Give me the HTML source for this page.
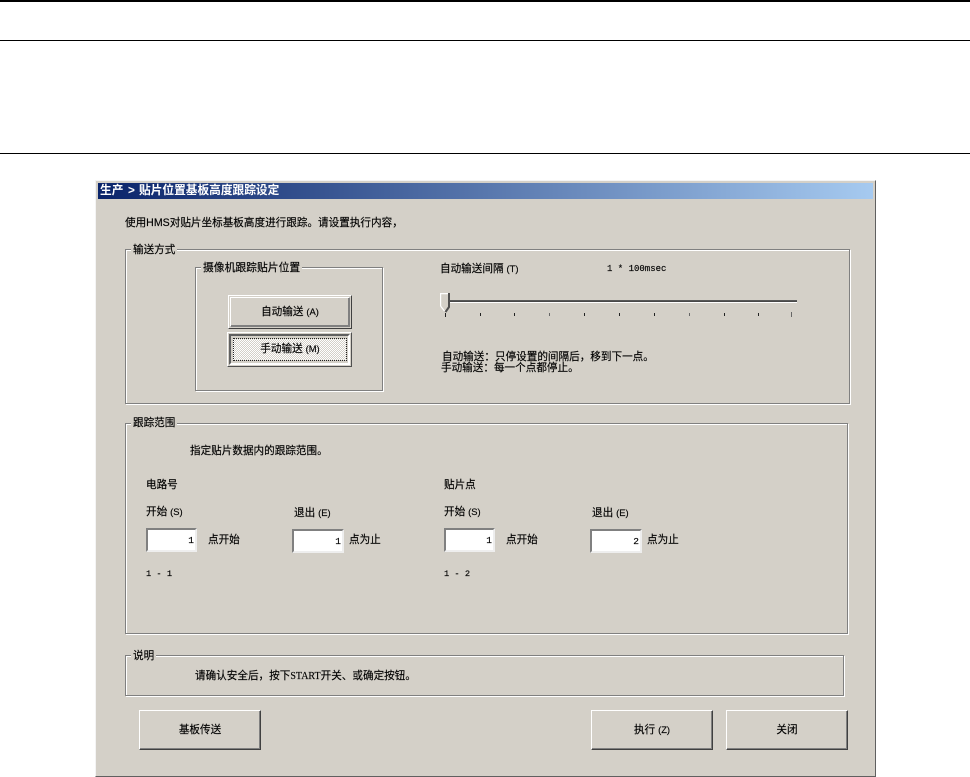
<!DOCTYPE html>
<html lang="zh-CN"><head><meta charset="utf-8"><title>贴片位置基板高度跟踪设定</title>
<style>
html,body{margin:0;padding:0;background:#fff;width:970px;height:777px;overflow:hidden}
body{position:relative;font-family:"Liberation Sans","WenQuanYi Zen Hei","Noto Sans CJK SC",sans-serif;font-size:10.6px;color:#000;-webkit-font-smoothing:none;-webkit-text-stroke:0.15px #000}
div,span{position:absolute;box-sizing:border-box;white-space:nowrap}
.t{line-height:12px}
.hr{left:0;width:970px;height:1px;background:#000}
.g{border:1px solid #808080;box-shadow:1px 1px 0 #fff,inset 1px 1px 0 #fff}
.l{background:#d4d0c8;padding:0 2px;line-height:12px}
.b{background:#d4d0c8;border-top:1px solid #fff;border-left:1px solid #fff;border-right:1px solid #404040;border-bottom:1px solid #404040;box-shadow:inset -1px -1px 0 #808080;text-align:center}
.bb{background:#d4d0c8;border:1px solid;border-color:#fff #404040 #404040 #fff;text-align:center}
.bi{border:1px solid;border-color:#fff #808080 #808080 #fff;box-shadow:inset -1px -1px 0 #808080;text-align:center}
.i{background:#fff;border:2px solid;border-color:#808080 #eee #eee #808080;text-align:right;padding-right:1px;line-height:21px;font-family:"Liberation Mono",monospace;font-size:9.5px}
.k{width:1px;height:3px;top:313px;background:#222}
.m{font-family:"Liberation Mono","WenQuanYi Zen Hei",monospace}
.s{position:static;font-size:9.4px}
</style></head><body>
<div class="hr" style="top:0;height:2px"></div>
<div class="hr" style="top:40px"></div>
<div class="hr" style="top:153px"></div>

<div style="left:95px;top:180px;width:781px;height:597px;background:#d4d0c8;border:1px solid;border-color:#f4f4f4 #606060 #606060 #f4f4f4;box-shadow:inset 1px 1px 0 #d4d0c8"></div>
<div style="left:98px;top:183px;width:775px;height:16px;background:linear-gradient(90deg,#0a246a,#a6caf0)"></div>
<div class="t" style="left:100px;top:185px;color:#fff;font-weight:bold;font-size:11.7px;-webkit-text-stroke:0">生产</div>
<div class="t" style="left:128px;top:185px;color:#fff;font-weight:bold;font-size:11.7px;-webkit-text-stroke:0">&gt;</div>
<div class="t" style="left:139px;top:185px;color:#fff;font-weight:bold;font-size:11.7px;-webkit-text-stroke:0">贴片位置基板高度跟踪设定</div>
<div class="t" style="left:125px;top:217px">使用HMS对贴片坐标基板高度进行跟踪。请设置执行内容，</div>

<div class="g" style="left:125px;top:249px;width:725px;height:155px"></div>
<div class="l" style="left:131px;top:244px">输送方式</div>
<div class="g" style="left:195px;top:267px;width:188px;height:124px"></div>
<div class="l" style="left:201px;top:262px;font-size:10.8px">摄像机跟踪贴片位置</div>

<div class="bb" style="left:228px;top:295px;width:124px;height:34px"></div>
<div class="bi" style="left:230px;top:297px;width:120px;height:30px;line-height:27px">自动输送 <span class="s">(A)</span></div>

<div class="bb" style="left:227px;top:332px;width:125px;height:35px;border-color:#fff #505050 #505050 #fff"></div>
<div style="left:229px;top:334px;width:121px;height:31px;border:2px solid;border-color:#606060 #fff #fff #606060"></div>
<div style="left:233px;top:338px;width:114px;height:23px;border:1px dotted #222;background:repeating-conic-gradient(#fff 0 25%,#d4d0c8 0 50%) 0 0/2px 2px;text-align:center;line-height:20px">手动输送 <span class="s">(M)</span></div>

<div class="t" style="left:440px;top:263px">自动输送间隔 <span class="s">(T)</span></div>
<div class="t m" style="left:607px;top:263px;font-size:9px">1 * 100msec</div>
<div style="left:449px;top:300px;width:348px;height:3px;background:linear-gradient(#707070 0,#404040 33%,#505050 66%,#fff 66%)"></div>
<svg style="position:absolute;left:440px;top:293px" width="12" height="20" viewBox="0 0 12 20"><path d="M0.5 0.5H9V14L5.5 19L0.5 13Z" fill="#d4d0c8"/><path d="M0.5 13V0.5H8.5" fill="none" stroke="#fff" stroke-width="1.4"/><path d="M0.5 13L4.5 18" stroke="#fff" fill="none" stroke-width="1.2"/><path d="M9 0V14L5.5 19" fill="none" stroke="#505050" stroke-width="2"/></svg>
<div class="k" style="left:445px;top:313px;height:4px"></div><div class="k" style="left:480px"></div><div class="k" style="left:514px"></div><div class="k" style="left:549px;background:#666"></div><div class="k" style="left:584px"></div><div class="k" style="left:619px"></div><div class="k" style="left:654px"></div><div class="k" style="left:689px;background:#666"></div><div class="k" style="left:724px"></div><div class="k" style="left:758px"></div><div class="k" style="left:791px;top:312px;height:5px;background:#666"></div>
<div class="t" style="left:442px;top:351px">自动输送：只停设置的间隔后，移到下一点。</div>
<div class="t" style="left:441px;top:362px">手动输送：每一个点都停止。</div>

<div class="g" style="left:125px;top:423px;width:723px;height:211px"></div>
<div class="l" style="left:131px;top:417px">跟踪范围</div>
<div class="t" style="left:190px;top:445px">指定贴片数据内的跟踪范围。</div>
<div class="t" style="left:146px;top:479px">电路号</div>
<div class="t" style="left:146px;top:506px">开始 <span class="s">(S)</span></div>
<div class="t" style="left:294px;top:507px">退出 <span class="s">(E)</span></div>
<div class="i" style="left:146px;top:528px;width:51px;height:24px">1</div>
<div class="t" style="left:208px;top:534px">点开始</div>
<div class="i" style="left:292px;top:529px;width:52px;height:24px">1</div>
<div class="t" style="left:349px;top:534px">点为止</div>
<div class="t m" style="left:146px;top:568px;font-size:8.7px">1 - 1</div>
<div class="t" style="left:444px;top:479px">贴片点</div>
<div class="t" style="left:444px;top:506px">开始 <span class="s">(S)</span></div>
<div class="t" style="left:592px;top:507px">退出 <span class="s">(E)</span></div>
<div class="i" style="left:444px;top:528px;width:51px;height:24px">1</div>
<div class="t" style="left:506px;top:534px">点开始</div>
<div class="i" style="left:590px;top:529px;width:52px;height:24px">2</div>
<div class="t" style="left:647px;top:534px">点为止</div>
<div class="t m" style="left:444px;top:568px;font-size:8.7px">1 - 2</div>

<div class="g" style="left:125px;top:655px;width:719px;height:41px"></div>
<div class="l" style="left:131px;top:650px">说明</div>
<div class="t" style="left:195px;top:670px">请确认安全后，按下<span class="s" style="font-family:'Liberation Serif',serif;font-size:10px">START</span>开关、或确定按钮。</div>

<div class="b" style="left:139px;top:710px;width:122px;height:40px;line-height:38px">基板传送</div>
<div class="b" style="left:591px;top:710px;width:122px;height:40px;line-height:38px">执行 <span class="s">(Z)</span></div>
<div class="b" style="left:726px;top:710px;width:122px;height:40px;line-height:38px">关闭</div>
</body></html>
